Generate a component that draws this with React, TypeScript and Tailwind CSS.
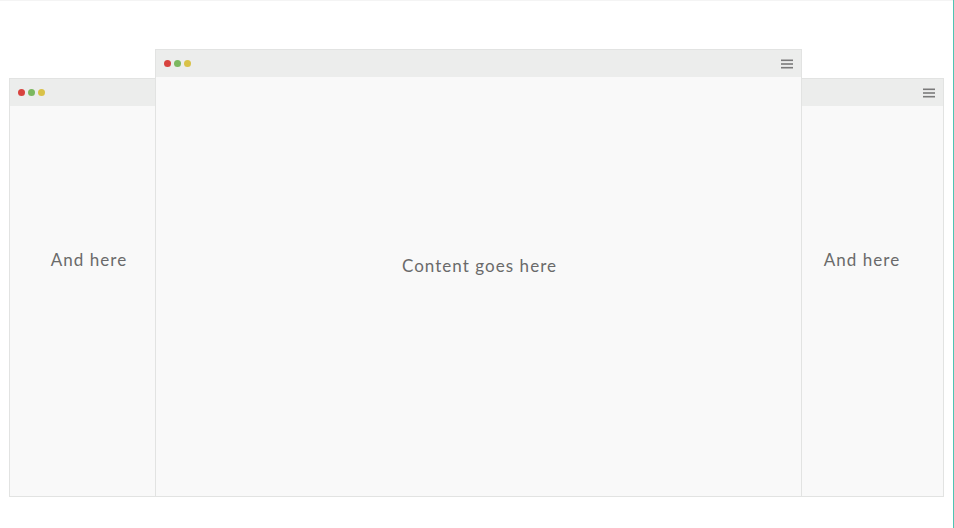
import React from 'react';

// Browser-window mockups stacked on a blank canvas
const Dots = () => (
  <div className="flex items-center gap-[3px]">
    <span className="w-[7px] h-[7px] rounded-full bg-[#d8433e]" />
    <span className="w-[7px] h-[7px] rounded-full bg-[#7cb860]" />
    <span className="w-[7px] h-[7px] rounded-full bg-[#d9c248]" />
  </div>
);

const Burger = () => (
  <svg width="12" height="10" viewBox="0 0 12 10" className="text-[#7a7a7a]">
    <rect x="0" y="0.5" width="12" height="1.6" fill="currentColor" />
    <rect x="0" y="4.2" width="12" height="1.6" fill="currentColor" />
    <rect x="0" y="7.9" width="12" height="1.6" fill="currentColor" />
  </svg>
);

interface WinProps {
  className: string;
  label: string;
  textClass: string;
}

const Win: React.FC<WinProps> = ({ className, label, textClass }) => (
  <div className={`absolute flex flex-col border border-[#e2e3e2] bg-[#f9f9f9] ${className}`}>
    <div className="h-[27px] shrink-0 flex items-center justify-between pl-[8px] pr-[8px] bg-[#ecedec]">
      <Dots />
      <Burger />
    </div>
    <div className={`flex-1 flex justify-center ${textClass}`}>
      <span className="text-[17px] tracking-[1.05px] text-[#6a6a6a]">{label}</span>
    </div>
  </div>
);

export default function App() {
  return (
    <div
      className="relative w-[954px] h-[528px] bg-white overflow-hidden"
      style={{ fontFamily: 'Lato, "Open Sans", sans-serif' }}
    >
      <div className="absolute left-0 top-0 w-full h-px bg-[#f4f4f4]" />
      <div className="absolute right-0 top-0 w-px h-full bg-[#4fc3b2]" />
      {/* side windows */}
      <Win className="left-[9px] top-[78px] w-[180px] h-[419px]" label="And here" textClass="pt-[141px] pr-[20px]" />
      <Win className="left-[760px] top-[78px] w-[184px] h-[419px]" label="And here" textClass="pt-[141px] pl-[20px]" />
      {/* main window */}
      <Win className="left-[155px] top-[49px] w-[647px] h-[448px]" label="Content goes here" textClass="pt-[176px] pl-[2px]" />
    </div>
  );
}
